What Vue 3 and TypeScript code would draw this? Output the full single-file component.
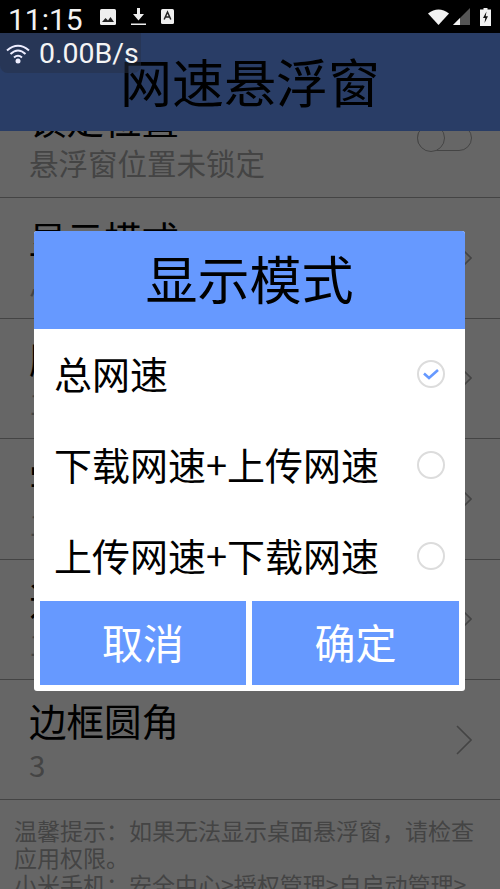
<script setup lang="ts">
interface Row {
  title: string
  sub: string
  toggle?: boolean
}
const rows: Row[] = [
  { title: '锁定位置', sub: '悬浮窗位置未锁定', toggle: true },
  { title: '显示模式', sub: '总网速' },
  { title: '刷新频率', sub: '1' },
  { title: '字体大小', sub: '1' },
  { title: '透明度', sub: '1' },
  { title: '边框圆角', sub: '3' },
]
const options = [
  { label: '总网速', checked: true },
  { label: '下载网速+上传网速', checked: false },
  { label: '上传网速+下载网速', checked: false },
]
</script>

<template>
  <div class="screen">
    <header class="status">
      <span class="time">11:15</span>
      <div class="notif">
        <svg width="16" height="16" viewBox="0 0 16 16"><rect width="16" height="16" rx="1.5" fill="#eee" /><path d="M2 13l3.500-4 2.500 2.500 2.500-3.500 3.500 5z" fill="#222" /></svg>
        <svg width="15" height="18" viewBox="0 0 15 18"><path d="M6 0h3v6h4l-5.500 6.500L2 6h4zM0 15.500h15V17H0z" fill="#eee" /></svg>
        <svg width="13" height="15" viewBox="0 0 13 15"><rect width="13" height="15" rx="1.500" fill="#eee" /><path d="M3.200 10.500L6.500 3l3.300 7.500M4.500 8h4" fill="none" stroke="#222" stroke-width="1.500" /></svg>
      </div>
      <div class="sys">
        <svg width="21" height="16" viewBox="0 0 21 16"><path d="M0 4.500Q10.500-3.500 21 4.500L10.500 16z" fill="#f2f2f2" /></svg>
        <svg width="17" height="17" viewBox="0 0 17 17"><path d="M17 0v17H0z" fill="#555" /><path d="M7 10v7H0z" fill="#f2f2f2" /></svg>
        <svg class="battery" width="11" height="18" viewBox="0 0 11 18"><path d="M3.500 0h4v1.500H11V18H0V1.500h3.500z" fill="#f2f2f2" /><path d="M6.500 3.500L3 10h2.300l-.8 5L8 8.300H5.700z" fill="#111" /></svg>
      </div>
    </header>

    <div class="app">
      <div class="toolbar">网速悬浮窗</div>
      <div class="scroller">
        <div class="list">
          <div v-for="row in rows" :key="row.title" class="row">
            <div class="row-text">
              <div class="row-title">{{ row.title }}</div>
              <div class="row-sub">{{ row.sub }}</div>
            </div>
            <span v-if="row.toggle" class="switch"><span class="knob"></span></span>
            <svg v-else class="chevron" width="16" height="30" viewBox="0 0 16 30"><path d="M1 1l14 14L1 29" fill="none" stroke="#aaa" stroke-width="1.600" /></svg>
          </div>
          <div class="notes">
            <p>温馨提示：如果无法显示桌面悬浮窗，请检查应用权限。</p>
            <p>小米手机：安全中心>授权管理>自启动管理></p>
          </div>
        </div>
      </div>
      <div class="scrim"></div>
    </div>

    <div class="chip">
      <svg width="24" height="21" viewBox="0 0 24 21"><g fill="none" stroke="#eef" stroke-width="2"><path d="M1 7.500Q12-2 23 7.500" /><path d="M4.500 11Q12 4 19.500 11" /><path d="M8 14.500Q12 11 16 14.500" /></g><circle cx="12" cy="18" r="2.500" fill="#eef" /></svg>
      <span>0.00B/s</span>
    </div>

    <section class="dialog">
      <h2 class="dialog-title">显示模式</h2>
      <div class="options">
        <div v-for="opt in options" :key="opt.label" class="option">
          <span>{{ opt.label }}</span>
          <span class="radio">
            <svg v-if="opt.checked" width="18" height="14" viewBox="0 0 18 14"><path d="M2 6.500l5 4.500 9-8" fill="none" stroke="#6699ff" stroke-width="2.600" /></svg>
          </span>
        </div>
      </div>
      <div class="actions">
        <button class="action">取消</button>
        <button class="action">确定</button>
      </div>
    </section>
  </div>
</template>

<style scoped>
.screen {
  position: relative;
  width: 500px;
  height: 889px;
  overflow: hidden;
  display: flex;
  flex-direction: column;
  background: #fff;
  font-family: "Noto Sans CJK SC", "Noto Sans", sans-serif;
}
.status {
  flex: none;
  height: 33px;
  background: #000;
  color: #f2f2f2;
  display: flex;
  align-items: center;
  padding: 0 9px;
  box-sizing: border-box;
}
.time {
  font-family: Roboto, sans-serif;
  font-size: 30px;
  line-height: 33px;
  width: 91px;
  position: relative;
  top: 3px;
  left: -1px;
}
.notif {
  display: flex;
  align-items: center;
  gap: 15px;
}
.sys {
  margin-left: auto;
  display: flex;
  align-items: center;
  gap: 4px;
}
.battery {
  margin-left: 6px;
}
.app {
  position: relative;
  flex: 1;
  min-height: 0;
  display: flex;
  flex-direction: column;
}
.toolbar {
  flex: none;
  height: 98px;
  line-height: 96px;
  background: #6699ff;
  color: #000;
  font-size: 52px;
  text-align: center;
}
.scroller {
  flex: 1;
  min-height: 0;
  overflow: hidden;
}
.list {
  margin-top: -53px;
}
.row {
  height: 120.4px;
  box-sizing: border-box;
  border-bottom: 1.2px solid #aaa;
  display: flex;
  align-items: center;
  justify-content: space-between;
  padding: 0 28px 0 29px;
}
.row-text {
  position: relative;
  top: 1px;
}
.row-title {
  font-size: 37.5px;
  line-height: 46px;
  color: #000;
}
.row-sub {
  font-size: 29.5px;
  line-height: 42px;
  color: #aaa;
}
.chevron {
  flex: none;
}
.switch {
  position: relative;
  width: 55px;
  height: 26px;
  box-sizing: border-box;
  border: 1.500px solid #aaa;
  border-radius: 13px;
}
.knob {
  position: absolute;
  left: -1.500px;
  top: -2px;
  width: 28px;
  height: 28px;
  box-sizing: border-box;
  border: 1.500px solid #aaa;
  border-radius: 50%;
  background: #fff;
}
.notes {
  padding: 17px 15px 0 14px;
  font-size: 23px;
  line-height: 27px;
  color: #aaa;
}
.notes p {
  margin: 0;
}
.scrim {
  position: absolute;
  inset: 0;
  background: rgba(0, 0, 0, 0.6);
}
.chip {
  position: absolute;
  left: 0;
  top: 33px;
  width: 141px;
  height: 40px;
  border-radius: 0 0 8px 8px;
  background: rgba(38, 47, 70, 0.5);
  color: #f4f4f4;
  font-family: Roboto, sans-serif;
  font-size: 28.500px;
  display: flex;
  align-items: center;
  gap: 9px;
  padding-left: 6px;
  box-sizing: border-box;
}
.dialog {
  position: absolute;
  left: 34px;
  top: 231px;
  width: 431px;
  height: 460px;
  background: #fff;
  border-radius: 3px;
  display: flex;
  flex-direction: column;
  overflow: hidden;
}
.dialog-title {
  margin: 0;
  flex: none;
  height: 98px;
  line-height: 93px;
  background: #6699ff;
  color: #000;
  font-size: 52px;
  font-weight: 400;
  text-align: center;
}
.options {
  flex: none;
  height: 272px;
  display: flex;
  flex-direction: column;
}
.option {
  flex: 1;
  display: flex;
  align-items: center;
  justify-content: space-between;
  padding: 0 20px 2px 20px;
  font-size: 38px;
  line-height: 50px;
  color: #000;
}
.radio {
  width: 28px;
  height: 28px;
  box-sizing: border-box;
  border: 2px solid #dcdcdc;
  border-radius: 50%;
  display: flex;
  align-items: center;
  justify-content: center;
  position: relative;
  top: 1px;
}
.actions {
  flex: 1;
  display: grid;
  grid-template-columns: 206px 207px;
  gap: 6px;
  padding: 0 6px 6px;
}
.action {
  border: none;
  background: #6699ff;
  color: #fff;
  font-family: inherit;
  font-size: 41px;
  line-height: 78px;
  padding: 0 0 4px;
}
</style>
